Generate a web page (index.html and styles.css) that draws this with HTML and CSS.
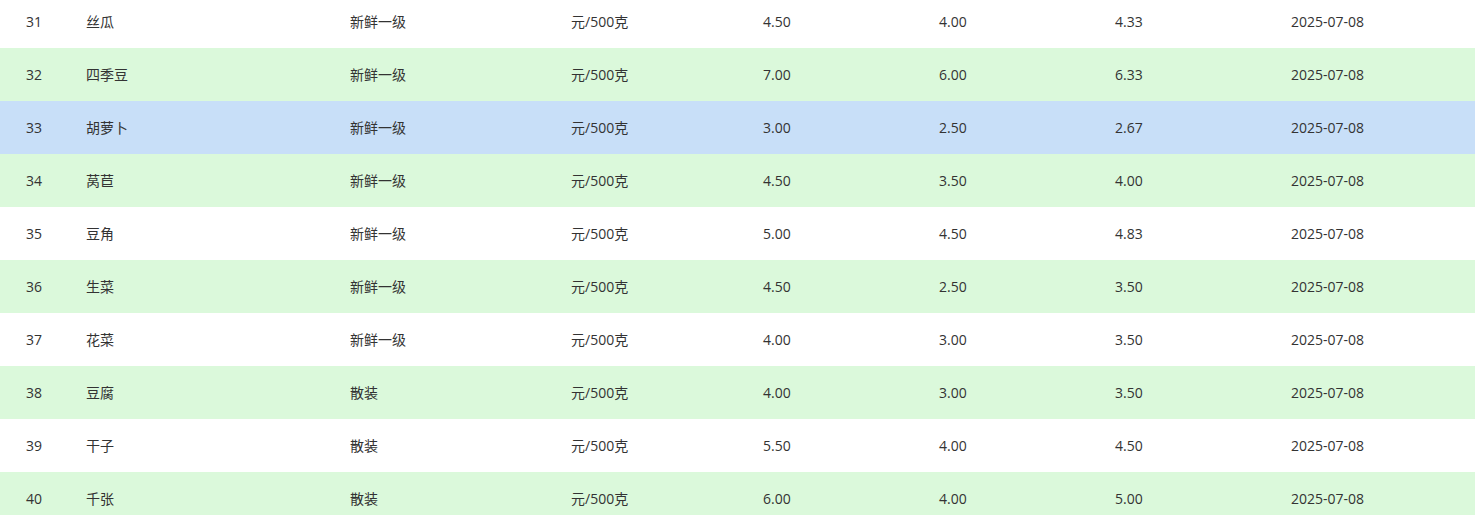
FILE: index.html
```html
<!DOCTYPE html>
<html lang="zh-CN">
<head>
<meta charset="utf-8">
<title>价格表</title>
<link rel="stylesheet" href="styles.css">
</head>
<body>
<table class="price-table">
  <colgroup>
    <col class="c-no"><col class="c-name"><col class="c-grade"><col class="c-unit"><col class="c-p"><col class="c-p"><col class="c-p"><col class="c-date">
  </colgroup>
  <tbody>
    <tr class="row-white"><td>31</td><td>丝瓜</td><td>新鲜一级</td><td>元/500克</td><td>4.50</td><td>4.00</td><td>4.33</td><td>2025-07-08</td></tr>
    <tr class="row-green"><td>32</td><td>四季豆</td><td>新鲜一级</td><td>元/500克</td><td>7.00</td><td>6.00</td><td>6.33</td><td>2025-07-08</td></tr>
    <tr class="row-blue"><td>33</td><td>胡萝卜</td><td>新鲜一级</td><td>元/500克</td><td>3.00</td><td>2.50</td><td>2.67</td><td>2025-07-08</td></tr>
    <tr class="row-green"><td>34</td><td>莴苣</td><td>新鲜一级</td><td>元/500克</td><td>4.50</td><td>3.50</td><td>4.00</td><td>2025-07-08</td></tr>
    <tr class="row-white"><td>35</td><td>豆角</td><td>新鲜一级</td><td>元/500克</td><td>5.00</td><td>4.50</td><td>4.83</td><td>2025-07-08</td></tr>
    <tr class="row-green"><td>36</td><td>生菜</td><td>新鲜一级</td><td>元/500克</td><td>4.50</td><td>2.50</td><td>3.50</td><td>2025-07-08</td></tr>
    <tr class="row-white"><td>37</td><td>花菜</td><td>新鲜一级</td><td>元/500克</td><td>4.00</td><td>3.00</td><td>3.50</td><td>2025-07-08</td></tr>
    <tr class="row-green"><td>38</td><td>豆腐</td><td>散装</td><td>元/500克</td><td>4.00</td><td>3.00</td><td>3.50</td><td>2025-07-08</td></tr>
    <tr class="row-white"><td>39</td><td>干子</td><td>散装</td><td>元/500克</td><td>5.50</td><td>4.00</td><td>4.50</td><td>2025-07-08</td></tr>
    <tr class="row-green"><td>40</td><td>千张</td><td>散装</td><td>元/500克</td><td>6.00</td><td>4.00</td><td>5.00</td><td>2025-07-08</td></tr>
  </tbody>
</table>
</body>
</html>
```
FILE: styles.css
```css
html, body {
  margin: 0;
  padding: 0;
  background: #ffffff;
  overflow: hidden;
}
body {
  font-family: "Open Sans", "Noto Sans CJK SC", sans-serif;
  font-size: 14px;
  color: #333333;
}
.price-table {
  width: 1475px;
  border-collapse: collapse;
  table-layout: fixed;
  margin-top: -5px;
}
.c-no { width: 70px; }
.c-name { width: 264px; }
.c-grade { width: 221px; }
.c-unit { width: 192px; }
.c-p { width: 176px; }
.c-date { width: 200px; }
.price-table td {
  height: 53px;
  padding: 0 0 1px 16px;
  text-align: left;
  vertical-align: middle;
  white-space: nowrap;
  box-sizing: border-box;
}
.price-table td:first-child {
  padding-left: 26px;
}
.row-white { background: #ffffff; }
.row-green { background: #dbf9db; }
.row-blue { background: #c8dff8; }
```
